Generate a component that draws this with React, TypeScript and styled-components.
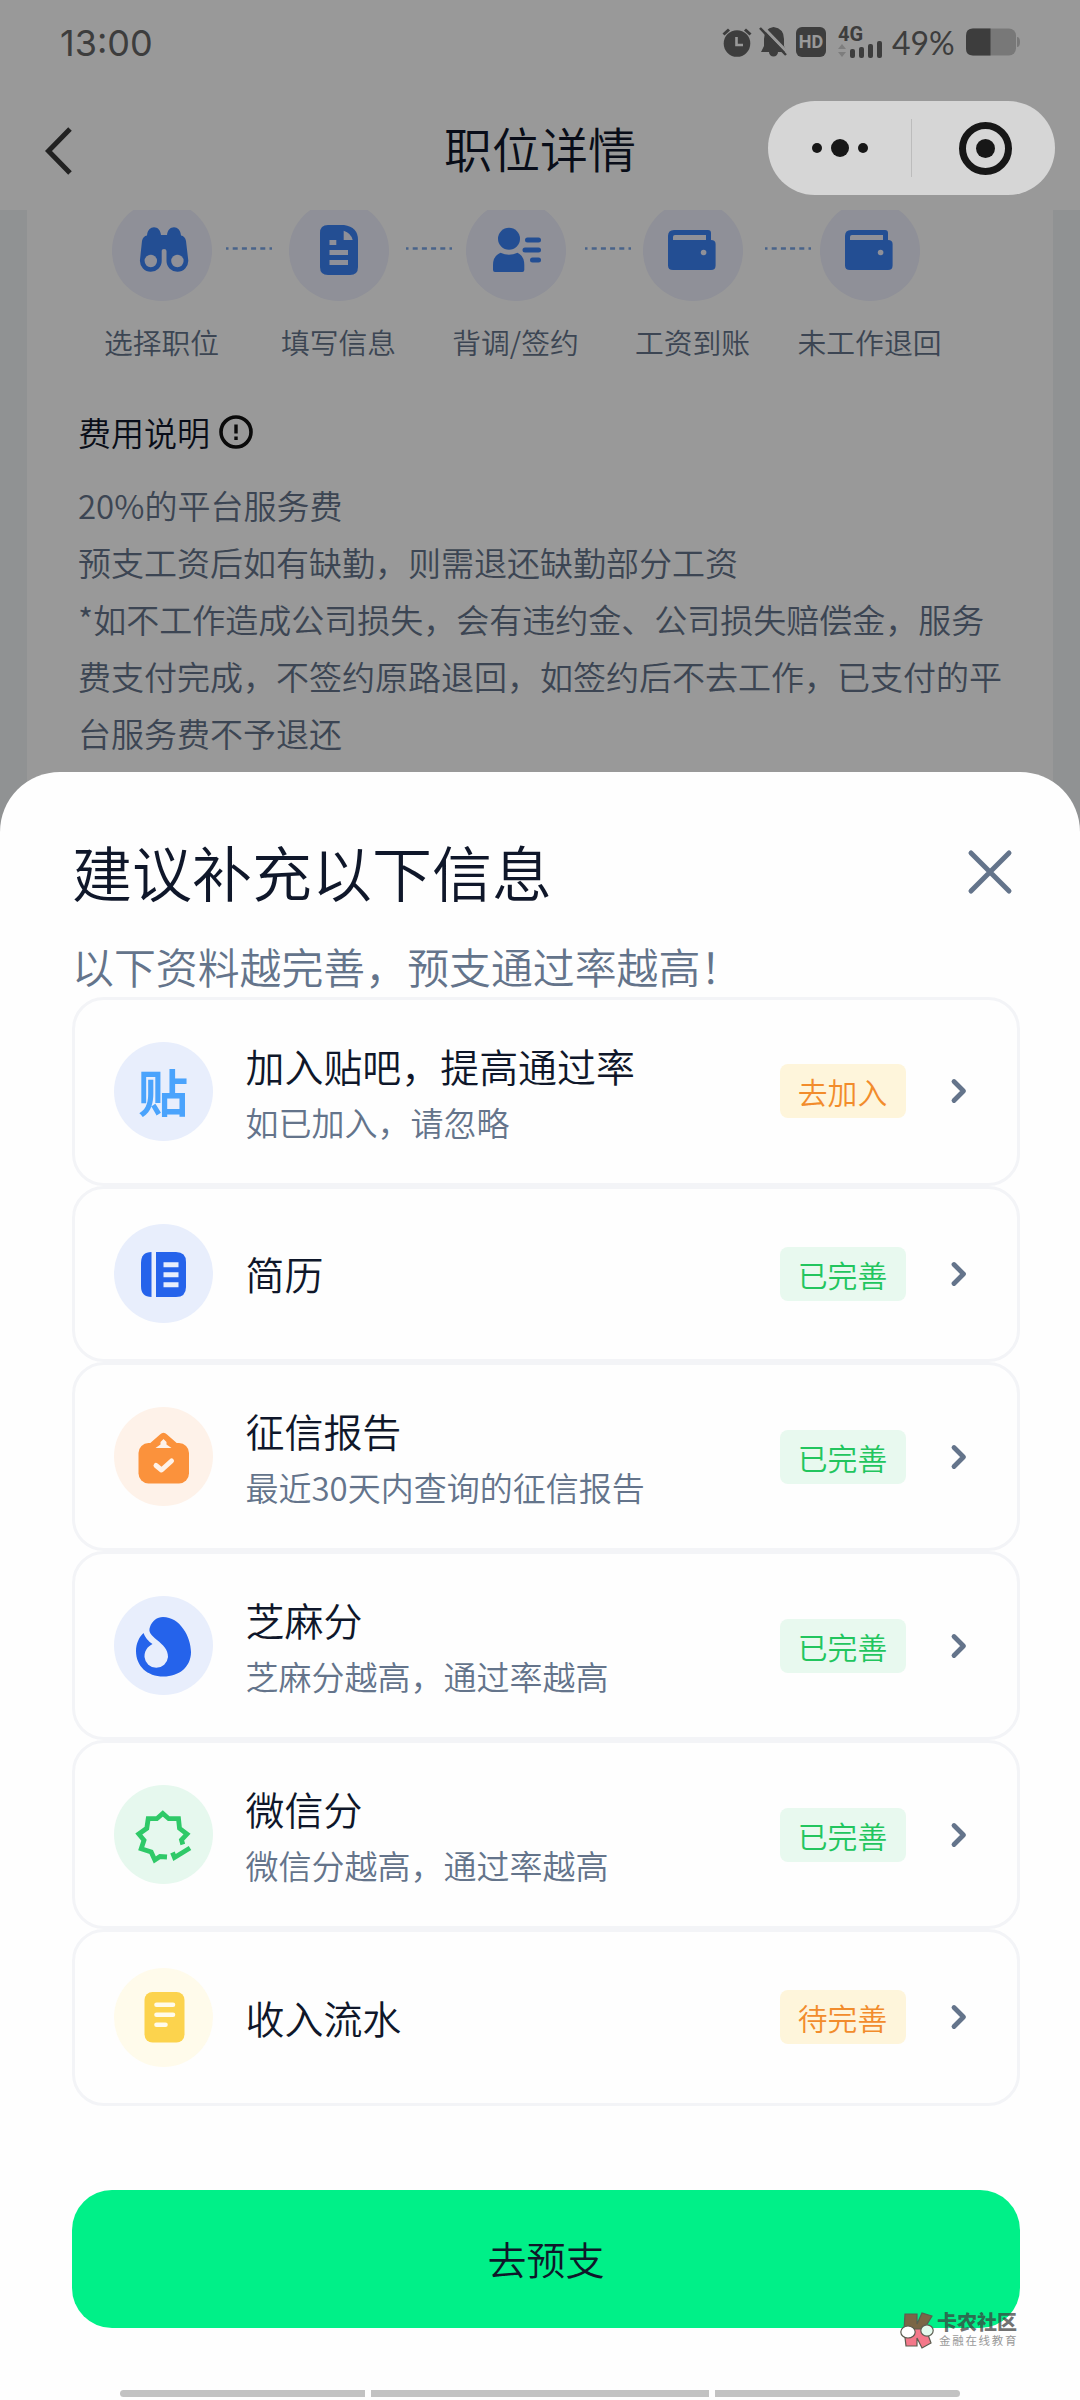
import React from 'react';
import styled, { createGlobalStyle } from 'styled-components';

const GlobalStyle = createGlobalStyle`
  * { box-sizing: border-box; }
  html, body { margin: 0; padding: 0; background: #fff; }
  body { font-family: "Noto Sans CJK SC", "Noto Sans", sans-serif; font-weight: 350; }
  svg { display: block; flex: none; }
`;

const Screen = styled.div`
  position: relative;
  width: 1080px;
  height: 2400px;
  overflow: hidden;
  background: #fff;
`;

/* ---------- page behind the sheet ---------- */

const StatusBar = styled.header`
  display: flex;
  align-items: center;
  justify-content: space-between;
  height: 84px;
  padding: 0 60px 0 60px;
  color: #666;
`;

const Clock = styled.span`
  font: 400 36px/40px Inter, sans-serif;
  padding-top: 1px;
`;

const StatusIcons = styled.div`
  display: flex;
  align-items: center;
`;

const HdBadge = styled.span`
  width: 30px;
  height: 30px;
  margin: 0 12px 0 8px;
  border-radius: 6px;
  background: #666;
  color: #fff;
  font: 700 18px/30px Roboto, sans-serif;
  text-align: center;
`;

const Network = styled.div`
  display: flex;
  flex-direction: column;
  width: 46px;
  height: 31px;
  margin-right: 8px;
  font: 700 20px/15px Roboto, sans-serif;
`;

const Bars = styled.div`
  display: flex;
  align-items: flex-end;
  justify-content: flex-end;
  gap: 4px;
  height: 17px;
  padding-right: 2px;
  margin-top: -1px;
`;

const Bar = styled.i<{ $h: number }>`
  width: 6px;
  height: ${(p) => p.$h}px;
  border-radius: 2px;
  background: #666;
`;

const Percent = styled.span`
  width: 74px;
  padding-top: 1px;
  font: 400 32px/34px Lato, sans-serif;
  white-space: nowrap;
`;

const TitleBar = styled.nav`
  display: grid;
  grid-template-columns: 100px 1fr 100px;
  align-items: center;
  height: 126px;
`;

const BackButton = styled.button`
  width: 100px;
  height: 60px;
  padding: 0 0 0 44px;
  margin-top: 8px;
  border: 0;
  background: none;
`;

const PageTitle = styled.h1`
  margin: 0;
  font-size: 48px;
  line-height: 72px;
  font-weight: 350;
  text-align: center;
  color: #0f172a;
`;

const PageBody = styled.main`
  height: 700px;
  padding: 0 27px;
  overflow: hidden;
  background: #f1f3f6;
`;

const DetailCard = styled.section`
  height: 100%;
  padding: 0 48px 0 51px;
  background: #fff;
`;

const Steps = styled.div`
  display: flex;
  margin: -9px 0 0 34px;
`;

const StepCircle = styled.div`
  flex: none;
  width: 100px;
  height: 100px;
  border-radius: 50%;
  background: #eef0fd;
`;

const Connector = styled.div<{ $lead: number }>`
  flex: none;
  display: flex;
  align-items: center;
  width: 77px;
  height: 95px;
  padding-left: ${(p) => p.$lead}px;
`;

const Labels = styled.div`
  display: flex;
  margin: 20px 0 0 -5px;
`;

const Label = styled.span`
  flex: none;
  width: 177px;
  font-size: 28.8px;
  line-height: 42px;
  text-align: center;
  color: #64748b;
`;

const FeeHeading = styled.h2`
  display: flex;
  align-items: center;
  gap: 8px;
  margin: 44px 0 0;
  font-size: 33px;
  line-height: 50px;
  font-weight: 350;
  color: #0f172a;
`;

const FeeText = styled.div`
  margin-top: 20px;
  font-size: 33px;
  line-height: 57.1px;
  color: #64748b;
  white-space: nowrap;
`;

const Dim = styled.div`
  position: absolute;
  inset: 0;
  background: rgba(0, 0, 0, 0.4);
`;

const Capsule = styled.div`
  position: absolute;
  top: 101px;
  left: 768px;
  display: flex;
  align-items: center;
  width: 287px;
  height: 94px;
  border-radius: 47px;
  background: #d6d6d6;
`;

const CapsuleHalf = styled.div<{ $inset: number }>`
  flex: none;
  display: flex;
  width: 143px;
  justify-content: center;
  gap: 9px;
  align-items: center;
  padding-left: ${(p) => p.$inset}px;
`;

const CapsuleLine = styled.i`
  width: 1px;
  height: 58px;
  background: #bcbcbc;
`;

const Dot = styled.i<{ $size: number }>`
  width: ${(p) => p.$size}px;
  height: ${(p) => p.$size}px;
  border-radius: 50%;
  background: #171717;
`;

const Ring = styled.div`
  display: flex;
  align-items: center;
  justify-content: center;
  width: 53px;
  height: 53px;
  border: 7px solid #171717;
  border-radius: 50%;
`;

/* ---------- bottom sheet ---------- */

const Sheet = styled.section`
  position: absolute;
  left: 0;
  right: 0;
  bottom: 0;
  display: flex;
  flex-direction: column;
  height: 1628px;
  padding: 56px 61px 3px 72px;
  border-radius: 60px 60px 0 0;
  background: #fefefe;
`;

const SheetHead = styled.div`
  display: flex;
  align-items: center;
  justify-content: space-between;
  height: 88px;
  padding-right: 6px;
`;

const SheetTitle = styled.h2`
  margin: 0;
  font-size: 60px;
  line-height: 86px;
  padding-bottom: 2px;
  font-weight: 350;
  color: #0f172a;
`;

const SheetHint = styled.p`
  margin: 19px 0 0;
  height: 61.5px;
  font-size: 41.9px;
  line-height: 62px;
  color: #64748b;
`;

const Row = styled.div`
  display: flex;
  align-items: center;
  width: 947.5px;
  padding: 0 49px 0 38.5px;
  border: 3px solid #f3f4f7;
  border-radius: 32px;
`;

const TallRow = styled(Row)`
  height: 189px;
`;

const ShortRow = styled(Row)`
  height: 176.5px;
`;

const RowIcon = styled.div<{ $bg: string }>`
  flex: none;
  display: flex;
  align-items: center;
  justify-content: center;
  width: 99px;
  height: 99px;
  border-radius: 50%;
  background: ${(p) => p.$bg};
`;

const TieGlyph = styled.span`
  font-size: 50px;
  line-height: 50px;
  padding-bottom: 3px;
  font-weight: 700;
  color: #4aa3fc;
`;

const RowText = styled.div<{ $drop: number }>`
  flex: 1;
  margin-left: 33px;
  padding-top: ${(p) => p.$drop}px;
`;

const RowTitle = styled.div`
  font-size: 38.95px;
  line-height: 57px;
  color: #0f172a;
`;

const RowSub = styled.div`
  margin-top: 1px;
  font-size: 33px;
  line-height: 55px;
  color: #64748b;
`;

const Tag = styled.span<{ $done: boolean }>`
  width: 126px;
  height: 54px;
  margin-right: 44px;
  border-radius: 8px;
  font-size: 29.8px;
  line-height: 55px;
  text-align: center;
  color: ${(p) => (p.$done ? '#22c55e' : '#f28c2c')};
  background: ${(p) => (p.$done ? '#e8f9ef' : '#fef5db')};
`;

const SubmitButton = styled.button`
  flex: none;
  width: 948px;
  height: 138px;
  margin-top: 84px;
  padding: 0 0 2px;
  border: 0;
  border-radius: 40px;
  background: #00f088;
  color: #0f172a;
  font: 350 39px/136px "Noto Sans CJK SC", sans-serif;
`;

const HomeBars = styled.div`
  display: flex;
  gap: 6px;
  margin: auto 0 0 48px;
`;

const HomeBar = styled.i<{ $w: number; $r: string }>`
  width: ${(p) => p.$w}px;
  height: 7px;
  border-radius: ${(p) => p.$r};
  background: #c2c2c2;
`;

const Watermark = styled.div`
  position: absolute;
  left: 900px;
  top: 2312px;
  display: flex;
  gap: 3px;
`;

const MarkText = styled.div`
  display: flex;
  flex-direction: column;
  white-space: nowrap;
`;

const MarkName = styled.span`
  font-size: 20px;
  line-height: 20px;
  font-weight: 900;
  color: rgba(60, 60, 60, 0.72);
`;

const MarkSlogan = styled.span`
  margin: 2px 0 0 2px;
  font-size: 11.5px;
  line-height: 13px;
  letter-spacing: 1.7px;
  font-weight: 400;
  color: #999;
`;

/* ---------- drawings ---------- */

const BLUE = '#3b82f6';
const PALE = '#eef0fd';

const Binoculars = () => (
  <svg width="100" height="100" viewBox="0 0 100 100">
    <path d="M35 34.500C35.500 29 38.500 26.300 42 26.300S48.500 29 49 34H55C55.500 29 58.500 26.300 62 26.300S68.500 29 69 34.500Q73 35 74 40L76.300 59.700A10.900 10.900 0 0 1 54.500 60V50Q54.500 48 52 48T49.700 50V60A10.900 10.900 0 0 1 27.900 59.700L30 40Q31 35 35 34.500Z" fill={BLUE} />
    <circle cx="38.800" cy="60" r="6.200" fill={PALE} />
    <circle cx="65.400" cy="60" r="6.200" fill={PALE} />
  </svg>
);

const FormDoc = () => (
  <svg width="100" height="100" viewBox="0 0 100 100">
    <path d="M39 24H55Q69 26 69 39V66Q69 74 61 74H39Q31 74 31 66V32Q31 24 39 24Z" fill={BLUE} />
    <path d="M54.700 29.700Q62 32 63.700 39H54.700Z" fill={PALE} />
    <path d="M40.500 41.500H47.300M40.500 51.500H59M40.500 61.500H59" stroke={PALE} strokeWidth="5" />
  </svg>
);

const Person = () => (
  <svg width="100" height="100" viewBox="0 0 100 100">
    <circle cx="43" cy="37.700" r="11" fill={BLUE} />
    <path d="M34.500 51.700Q43 56 51.500 51.700Q58.300 55 58.300 64V69Q58.300 71 56.300 71H29Q27 71 27 69V64Q27 55 34.500 51.700Z" fill={BLUE} />
    <path d="M61.500 39H72.500M59 49H72.500M66.500 59H72.500" stroke={BLUE} strokeWidth="5" strokeLinecap="round" />
  </svg>
);

const Wallet = () => (
  <svg width="100" height="100" viewBox="0 0 100 100">
    <path d="M31 29H65Q68 29 68 32V39Q72.600 39 72.600 43V64.500Q72.600 69 68 69H30Q25 69 25 64.500V35Q25 29 31 29Z" fill={BLUE} />
    <path d="M30 39V36Q30 34 32 34H63V39Z" fill={PALE} />
    <circle cx="60.600" cy="51.500" r="2.800" fill={PALE} />
  </svg>
);

const ResumeIcon = () => (
  <svg width="98" height="98" viewBox="0 0 98 98">
    <path d="M37.500 27V72Q27 72 27 61V38Q27 27 37.500 27Z" fill="#2563eb" />
    <path d="M42 27H62Q72 27 72 37V62Q72 72 62 72H42Z" fill="#2563eb" />
    <path d="M49.500 39.700H64.500M49.500 49.700H64.500M49.500 59.700H64.500" stroke="#e8eefc" strokeWidth="5" />
  </svg>
);

const ReportIcon = () => (
  <svg width="98" height="98" viewBox="0 0 98 98">
    <rect x="24.500" y="35" width="50.500" height="40.500" rx="10" fill="#fb923c" />
    <path d="M34 37L46 26.500Q49.500 23 53 26.500L65 37Z" fill="#fb923c" />
    <path d="M49.500 31L52.500 34V36.500L57.500 40H41.500L46.500 36.500V34Z" fill="#fef2e9" />
    <path d="M42 57.500L47.500 62L57.500 53" fill="none" stroke="#fef2e9" strokeWidth="5" strokeLinecap="round" strokeLinejoin="round" />
  </svg>
);

const SesameIcon = () => (
  <svg width="98" height="98" viewBox="0 0 98 98">
    <path d="M49 20C66 20 77 40 77 55C77 70 65 79.500 49.500 79.500C33 79.500 22 69 22 54C22 47 25 40 29.500 36Q32 43 38.500 47C33 50 30.500 54 30.500 60A11.800 11.800 0 0 0 54 60C54 52 49 48 43 43C37 38 34 35 36 30C38 24 43 20 49 20Z" fill="#2563eb" />
  </svg>
);

const WechatScoreIcon = () => (
  <svg width="98" height="98" viewBox="0 0 98 98" fill="none" stroke="#2fc968" strokeWidth="4.800">
    <path d="M68.800 58.500L67.500 54L73 48L65.500 42.300L64.500 32.700H54.800L48.800 27.500L42.800 32.700H34.200L32.800 42.300L24.800 48L30 54.200L27.200 62.700L37.200 66L40.800 74L46 70.500L53 71" />
    <path d="M58.500 66.500L60.500 71.500L76 62" />
  </svg>
);

const IncomeIcon = () => (
  <svg width="98" height="98" viewBox="0 0 98 98">
    <rect x="30.500" y="24" width="40" height="50.500" rx="8" fill="#fcd34d" />
    <path d="M42.500 36.800H59M42.500 46.800H59M42.500 56.800H51.500" stroke="#fffbeb" strokeWidth="4.600" strokeLinecap="round" />
  </svg>
);

const steps = [
  { label: '选择职位', icon: <Binoculars />, lead: 14 },
  { label: '填写信息', icon: <FormDoc />, lead: 17 },
  { label: '背调/签约', icon: <Person />, lead: 19 },
  { label: '工资到账', icon: <Wallet />, lead: 22 },
  { label: '未工作退回', icon: <Wallet />, lead: 0 },
];

const feeLines = [
  '20%的平台服务费',
  '预支工资后如有缺勤，则需退还缺勤部分工资',
  '*如不工作造成公司损失，会有违约金、公司损失赔偿金，服务',
  '费支付完成，不签约原路退回，如签约后不去工作，已支付的平',
  '台服务费不予退还',
];

const rows = [
  { title: '加入贴吧，提高通过率', sub: '如已加入，请忽略', tag: '去加入', done: false, bg: '#e8eefc', icon: <TieGlyph>贴</TieGlyph> },
  { title: '简历', sub: '', tag: '已完善', done: true, bg: '#e8eefc', icon: <ResumeIcon /> },
  { title: '征信报告', sub: '最近30天内查询的征信报告', tag: '已完善', done: true, bg: '#fef2e9', icon: <ReportIcon /> },
  { title: '芝麻分', sub: '芝麻分越高，通过率越高', tag: '已完善', done: true, bg: '#e8eefc', icon: <SesameIcon /> },
  { title: '微信分', sub: '微信分越高，通过率越高', tag: '已完善', done: true, bg: '#e6f8ee', icon: <WechatScoreIcon /> },
  { title: '收入流水', sub: '', tag: '待完善', done: false, bg: '#fffbeb', icon: <IncomeIcon /> },
];

export default function App() {
  return (
    <Screen>
      <GlobalStyle />
      <StatusBar>
        <Clock>13:00</Clock>
        <StatusIcons>
          <svg width="30" height="30" viewBox="0 0 30 30">
            <circle cx="15" cy="16.500" r="13.300" fill="#666" />
            <path d="M1.500 7.500L7 2.500M28.500 7.500L23 2.500" stroke="#666" strokeWidth="3" />
            <path d="M14.500 10V18H21" fill="none" stroke="#fff" strokeWidth="2.600" />
          </svg>
          <svg width="36" height="30" viewBox="-8 0 36 30">
            <path d="M13.500 0Q24 1.500 24 12V19L27 25H18A4.500 4.500 0 0 1 9 25H1L4 19V12Q4 1.500 13.500 0Z" fill="#666" />
            <path d="M2 -1L29 27" stroke="#fff" strokeWidth="3" />
            <path d="M0 1L26 28" stroke="#666" strokeWidth="2.500" />
          </svg>
          <HdBadge>HD</HdBadge>
          <Network>
            4G
            <Bars>
              <svg width="8" height="14" viewBox="0 0 8 14" fill="#d0d0d0">
                <path d="M0 5L4 0L8 5ZM0 8H8L4 13Z" />
              </svg>
              <Bar $h={9} />
              <Bar $h={11} />
              <Bar $h={14} />
              <Bar $h={17} />
            </Bars>
          </Network>
          <Percent>49%</Percent>
          <svg width="54" height="28" viewBox="0 0 54 28">
            <rect x="0" y="0.500" width="50" height="27" rx="7" fill="#c9c9c9" />
            <path d="M51 9Q54 9 54 14T51 19Z" fill="#c9c9c9" />
            <path d="M7 0.500H24.500V27.500H7Q0 27.500 0 20.500V7.500Q0 0.500 7 0.500Z" fill="#666" />
          </svg>
        </StatusIcons>
      </StatusBar>
      <TitleBar>
        <BackButton aria-label="返回">
          <svg width="30" height="50" viewBox="0 0 30 50">
            <path d="M26 3L4.500 25L26 47" fill="none" stroke="#393939" strokeWidth="5" />
          </svg>
        </BackButton>
        <PageTitle>职位详情</PageTitle>
      </TitleBar>
      <PageBody>
        <DetailCard>
          <Steps>
            {steps.map((s) => (
              <React.Fragment key={s.label}>
                <StepCircle>{s.icon}</StepCircle>
                {s.lead > 0 && (
                  <Connector $lead={s.lead}>
                    <svg width="46" height="3" viewBox="0 0 46 3">
                      <path d="M0 1.500H46" stroke="#7ba6e6" strokeWidth="2.400" strokeDasharray="5 4.200" strokeDashoffset="2.500" />
                    </svg>
                  </Connector>
                )}
              </React.Fragment>
            ))}
          </Steps>
          <Labels>
            {steps.map((s) => (
              <Label key={s.label}>{s.label}</Label>
            ))}
          </Labels>
          <FeeHeading>
            费用说明
            <svg width="36" height="36" viewBox="0 0 36 36">
              <circle cx="18" cy="18" r="15" fill="none" stroke="#111" strokeWidth="3.600" />
              <path d="M18 10.500V19.500M18 22.500V26" stroke="#111" strokeWidth="3.400" />
            </svg>
          </FeeHeading>
          <FeeText>
            {feeLines.map((line) => (
              <div key={line}>{line}</div>
            ))}
          </FeeText>
        </DetailCard>
      </PageBody>

      <Dim />

      <Capsule>
        <CapsuleHalf $inset={0}>
          <Dot $size={10} />
          <Dot $size={18} />
          <Dot $size={10} />
        </CapsuleHalf>
        <CapsuleLine />
        <CapsuleHalf $inset={4}>
          <Ring>
            <Dot $size={19} />
          </Ring>
        </CapsuleHalf>
      </Capsule>

      <Sheet>
        <SheetHead>
          <SheetTitle>建议补充以下信息</SheetTitle>
          <svg width="46" height="46" viewBox="0 0 46 46">
            <path d="M4 4L42 42M42 4L4 42" stroke="#64748b" strokeWidth="5" strokeLinecap="round" />
          </svg>
        </SheetHead>
        <SheetHint>以下资料越完善，预支通过率越高！</SheetHint>
        {rows.map((r) => {
          const Line = r.sub ? TallRow : ShortRow;
          return (
            <Line key={r.title}>
              <RowIcon $bg={r.bg}>{r.icon}</RowIcon>
              <RowText $drop={r.sub ? 4 : 0}>
                <RowTitle>{r.title}</RowTitle>
                {r.sub && <RowSub>{r.sub}</RowSub>}
              </RowText>
              <Tag $done={r.done}>{r.tag}</Tag>
              <svg width="18" height="28" viewBox="0 0 18 28">
                <path d="M4 4.500L13.500 14L4 23.500" fill="none" stroke="#64748b" strokeWidth="4.800" strokeLinecap="round" strokeLinejoin="round" />
              </svg>
            </Line>
          );
        })}
        <SubmitButton>去预支</SubmitButton>
        <HomeBars>
          <HomeBar $w={245} $r="4px 0 0 4px" />
          <HomeBar $w={338} $r="0" />
          <HomeBar $w={245} $r="0 4px 4px 0" />
        </HomeBars>
      </Sheet>

      <Watermark>
        <svg width="34" height="37" viewBox="0 0 34 37">
          <g stroke="#5c5c50" strokeWidth="1.200">
            <path d="M5 2H17V12L22 1L32 4L26 14V19L17 18H4Z" fill="#7a6646" />
            <path d="M4 17H26L31 31L22 36L17 26V34H6Z" fill="#f4788a" />
            <ellipse cx="8" cy="20" rx="7.200" ry="6" fill="#fff" />
            <ellipse cx="27" cy="18.500" rx="6.200" ry="5.700" fill="#e4fbef" />
          </g>
        </svg>
        <MarkText>
          <MarkName>卡农社区</MarkName>
          <MarkSlogan>金融在线教育</MarkSlogan>
        </MarkText>
      </Watermark>
    </Screen>
  );
}
